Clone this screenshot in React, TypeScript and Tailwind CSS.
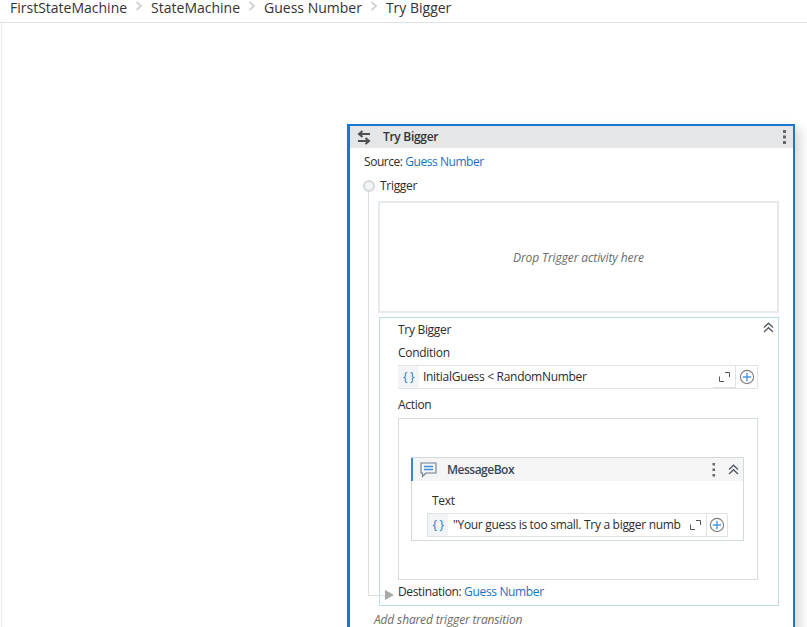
import React from "react";

const Chevron = () => (
  <svg width="8" height="10" viewBox="0 0 8 10" className="mx-[8px] mt-[1px]" fill="none" stroke="#d0d2d5" strokeWidth="2">
    <path d="M1.5 1 L6 5 L1.5 9" />
  </svg>
);

const Plus = ({ size = 16 }: { size?: number }) => (
  <svg width={size} height={size} viewBox="0 0 16 16" fill="none">
    <circle cx="8" cy="8" r="6.6" stroke="#7d7d7d" strokeWidth="1.1" />
    <path d="M8 3.8V12.2M3.8 8H12.2" stroke="#4a98e4" strokeWidth="1.4" />
  </svg>
);

const Expand = () => (
  <svg width="11" height="10" viewBox="0 0 11 10" fill="none" stroke="#555" strokeWidth="1">
    <path d="M0.5 4.5V9.5H5" />
    <path d="M6 0.5H10.5V5" />
  </svg>
);

const Collapse = () => (
  <svg width="11" height="11" viewBox="0 0 11 11" fill="none" stroke="#4d5560" strokeWidth="1.2">
    <path d="M1 5.5L5.5 1.2L10 5.5" />
    <path d="M1 10L5.5 5.7L10 10" />
  </svg>
);

const Braces = () => <span className="text-[#2378cc] text-[12px] leading-none">{"{ }"}</span>;

export default function App() {
  return (
    <div className="h-[627px] w-[807px] overflow-hidden bg-white flex flex-col text-[12px] text-[#2b2b2b]" style={{ fontFamily: '"Open Sans", "Noto Sans", sans-serif' }}>
      <div className="h-[23px] shrink-0 border-b border-[#dde2e7] pl-[10px] flex items-start text-[14px] leading-[15px] text-[#333]">
        <span>FirstStateMachine</span>
        <Chevron />
        <span>StateMachine</span>
        <Chevron />
        <span>Guess Number</span>
        <Chevron />
        <span>Try Bigger</span>
      </div>
      <div className="flex-1 min-h-0 border-l border-[#e8ebee] ml-[1px] pl-[345px] pt-[101px]">
        <div className="w-[448px] h-[600px] border-[2px] border-l-[3px] border-[#1976d2] shadow-[6px_4px_10px_rgba(0,0,0,0.14)] bg-white">
          <div className="h-[22px] bg-[#e4e6e8] flex items-center pl-[7px] pr-[5px]">
            <svg width="14" height="15" viewBox="0 0 14 15" fill="none" stroke="#505050" strokeWidth="2">
              <path d="M13 4H2M5.5 1L2 4L5.5 7" />
              <path d="M1 11H12M8.5 8L12 11L8.5 14" />
            </svg>
            <span className="ml-[12px] font-semibold text-[#333] tracking-[-0.3px]">Try Bigger</span>
            <svg width="6" height="16" viewBox="0 0 6 16" className="ml-auto" fill="#666">
              <rect x="1" y="1" width="3" height="3" />
              <rect x="1" y="6.5" width="3" height="3" />
              <rect x="1" y="12" width="3" height="3" />
            </svg>
          </div>
          <div className="pl-[14px] pt-[6px] h-[16px] leading-[16px] tracking-[-0.45px] whitespace-nowrap box-content">
            Source: <span className="text-[#1d6fc0]">Guess Number</span>
          </div>
          <div className="relative ml-[13px] mt-[8px] flex items-center h-[16px] tracking-[-0.3px]">
            <span className="w-[12px] h-[12px] rounded-full bg-[#f3f4f5] border-[2px] border-[#d3d8dc]" />
            <span className="ml-[5px]">Trigger</span>
          </div>
          <div className="relative ml-[28px] mr-[14px]">
            <div className="absolute z-10 left-[-10px] top-[-9px] w-[18px] h-[404px] border-l border-b border-[#dadfe2]" />
            <div className="absolute z-10 left-[7px] top-[389px] w-0 h-0 border-y-[5px] border-y-transparent border-l-[9px] border-l-[#a9a9a9]" />
            <div className="mt-[7px] h-[112px] border-[2px] border-[#e7eaed] flex items-center justify-center italic text-[#6b6b6b] tracking-[-0.1px] pt-[2px]">
              Drop Trigger activity here
            </div>
            <div className="mt-[4px] ml-[1px] h-[289px] border border-[#bcdbe3] bg-white relative pl-[18px] pr-[20px] tracking-[-0.3px]">
              <div className="flex items-center justify-between h-[23px]">
                <span>Try Bigger</span>
                <span className="mr-[-16px] mt-[-4px]"><Collapse /></span>
              </div>
              <div className="h-[16px] mt-[4px] leading-[16px]">Condition</div>
              <div className="mt-[4px] h-[24px] border border-[#dfe3e6] border-l-0 flex items-center">
                <div className="w-[21px] h-full bg-[#f3f4f5] flex items-center justify-center"><Braces /></div>
                <span className="ml-[4px]">InitialGuess &lt; RandomNumber</span>
                <div className="ml-auto h-full flex items-center pr-[5px] pl-[6px] border-b border-[#dfe3e6]"><Expand /></div>
                <div className="w-[22px] h-full border-l border-[#dfe3e6] flex items-center justify-center"><Plus /></div>
              </div>
              <div className="h-[16px] mt-[8px] leading-[16px]">Action</div>
              <div className="mt-[5px] h-[162px] border border-[#d5dde1] pt-[38px] pl-[12px] pr-[13px]">
                <div className="h-[84px] border border-[#d3dadd]">
                  <div className="h-[23px] bg-[#f5f5f5] -ml-px border-l-[2px] border-[#3a85d0] flex items-center pl-[7px] pr-[4px]">
                    <svg width="17" height="16" viewBox="0 0 17 16" fill="none">
                      <path d="M1 1H16V11H6L2.5 14.5V11H1Z" stroke="#6d7f90" strokeWidth="1.1" />
                      <path d="M4 4.5H13M4 7.5H13" stroke="#3f8fdc" strokeWidth="1.5" />
                    </svg>
                    <span className="ml-[10px] font-semibold text-[#3a4652] tracking-[-0.5px]">MessageBox</span>
                    <svg width="4" height="16" viewBox="0 0 4 16" className="ml-auto mr-[12px]" fill="#666">
                      <rect x="0.5" y="1" width="2.5" height="2.5" />
                      <rect x="0.5" y="6.5" width="2.5" height="2.5" />
                      <rect x="0.5" y="12" width="2.5" height="2.5" />
                    </svg>
                    <Collapse />
                  </div>
                  <div className="pl-[20px] h-[16px] mt-[12px] leading-[16px]">Text</div>
                  <div className="ml-[15px] mr-[15px] mt-[4px] h-[24px] border border-[#dfe3e6] flex items-center">
                    <div className="w-[20px] h-full bg-[#f3f4f5] flex items-center justify-center"><Braces /></div>
                    <span className="ml-[5px] whitespace-nowrap">"Your guess is too small. Try a bigger numb</span>
                    <div className="ml-auto h-full flex items-center pr-[5px]"><Expand /></div>
                    <div className="w-[21px] h-full border-l border-[#dfe3e6] flex items-center justify-center"><Plus /></div>
                  </div>
                </div>
              </div>
              <div className="h-[16px] mt-[4px] leading-[16px] tracking-[-0.35px]">Destination: <span className="text-[#1d6fc0]">Guess Number</span></div>
            </div>
          </div>
          <div className="ml-[24px] mt-[6px] italic text-[#6b6b6b] tracking-[-0.15px] leading-[16px]">Add shared trigger transition</div>
        </div>
      </div>
    </div>
  );
}
